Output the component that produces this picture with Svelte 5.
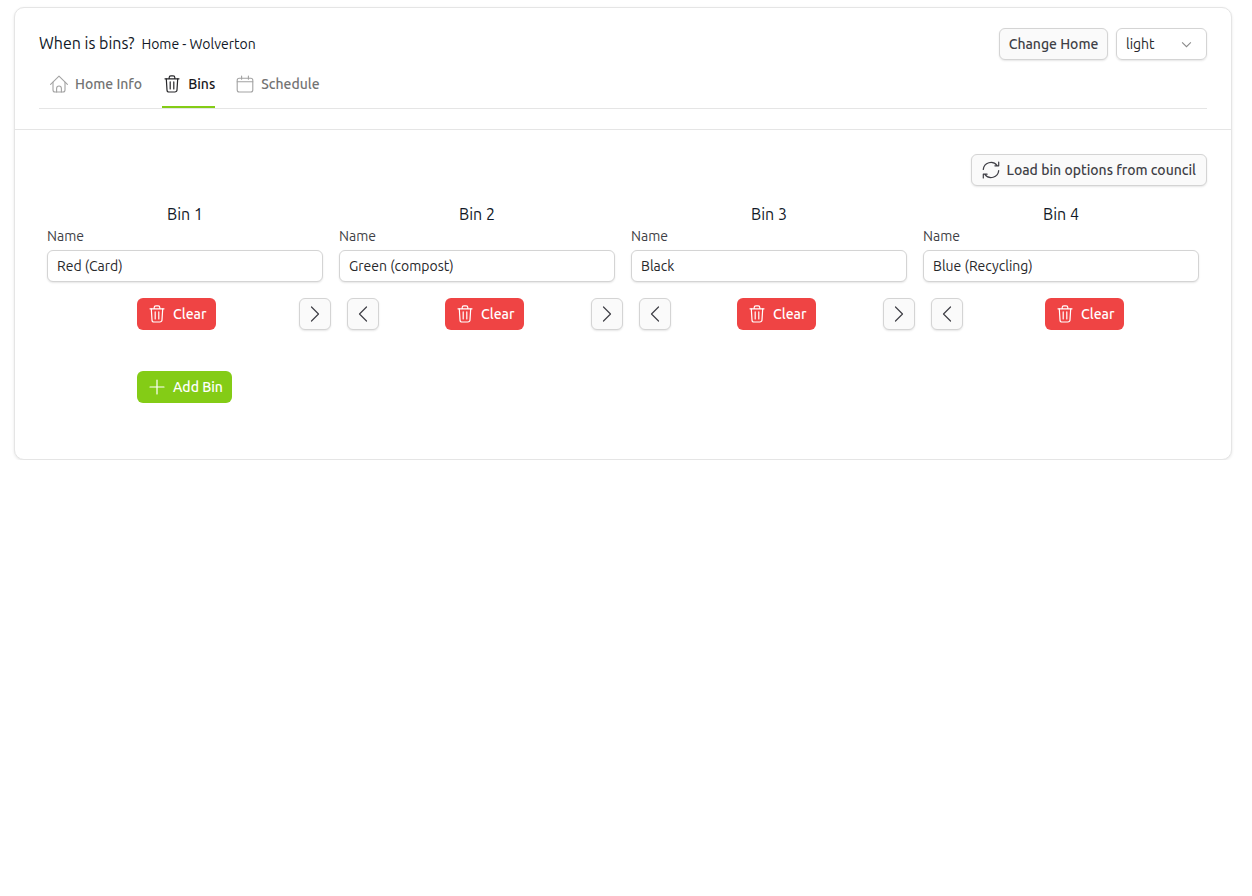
<script>
  const bins = ['Red (Card)', 'Green (compost)', 'Black', 'Blue (Recycling)'];
</script>

{#snippet trash(cls)}
  <svg class={cls} viewBox="0 0 18 18" fill="none" stroke="currentColor" stroke-width="1.2" stroke-linecap="round" stroke-linejoin="round">
    <path d="M2 3.8h14M6.2 3.8V2.6A1.7 1.7 0 0 1 7.9 .9h2.2a1.7 1.7 0 0 1 1.7 1.7v1.2" />
    <path d="M3.3 3.8l.7 11.1a2.1 2.1 0 0 0 2.1 2.1h5.8a2.1 2.1 0 0 0 2.1-2.1l.7-11.1" />
    <path d="M7.2 6.8v7.2M10.8 6.8v7.2" />
  </svg>
{/snippet}

<div class="card">
  <header class="head">
    <div class="top">
      <div class="title"><span class="app">When is bins?</span><span class="home">Home - Wolverton</span></div>
      <div class="actions">
        <button class="btn change">Change Home</button>
        <div class="select">
          <span>light</span>
          <svg viewBox="0 0 12 8" class="chev" fill="none" stroke="currentColor" stroke-width="1.2"><path d="M1 1.5l5 5 5-5" /></svg>
        </div>
      </div>
    </div>
    <nav class="tabs">
      <div class="tab">
        <svg class="ti" viewBox="0 0 18 18" fill="none" stroke="currentColor" stroke-width="1.1" stroke-linejoin="round" stroke-linecap="round">
          <path d="M.6 9.4L9 1.2l8.4 8.2" />
          <path d="M3 7.2v7.8a2 2 0 0 0 2 2h8a2 2 0 0 0 2-2V7.2" />
          <path d="M6.6 17v-3.6a2.4 2.4 0 0 1 4.8 0V17" />
        </svg>
        Home Info
      </div>
      <div class="tab active">{@render trash('ti')} Bins</div>
      <div class="tab">
        <svg class="ti" viewBox="0 0 18 18" fill="none" stroke="currentColor" stroke-width="1.1" stroke-linecap="round">
          <rect x="1.2" y="3.2" width="15.6" height="13.8" rx="2" />
          <path d="M1.2 6.8h15.6M5.6 1v3.2M12.4 1v3.2" />
        </svg>
        Schedule
      </div>
    </nav>
  </header>

  <main class="body">
    <div class="load-row">
      <button class="btn load">
        <svg class="ti" viewBox="0 0 18 18" fill="none" stroke="currentColor" stroke-width="1.2" stroke-linecap="round" stroke-linejoin="round">
          <path d="M1.3 8.4A7.7 7.7 0 0 1 15 4.4M16.7 1v3.8h-3.8" />
          <path d="M16.7 9.6A7.7 7.7 0 0 1 3 13.6M1.3 17v-3.8h3.8" />
        </svg>
        Load bin options from council
      </button>
    </div>
    <div class="bins">
      {#each bins as bin, i}
        <section class="bin">
          <h3>Bin {i + 1}</h3>
          <div class="field">
            <label for={`bin-${i}`}>Name</label>
            <input id={`bin-${i}`} value={bin} />
          </div>
          <div class="controls">
            {#if i > 0}
              <button class="btn sq" aria-label="Move left">
                <svg viewBox="0 0 10 16" fill="none" stroke="currentColor" stroke-width="1.2" stroke-linecap="round" stroke-linejoin="round"><path d="M8.5 1L1.5 8l7 7" /></svg>
              </button>
            {/if}
            <div class="mid">
              <button class="btn solid red">{@render trash('ti')} Clear</button>
            </div>
            {#if i < bins.length - 1}
              <button class="btn sq" aria-label="Move right">
                <svg viewBox="0 0 10 16" fill="none" stroke="currentColor" stroke-width="1.2" stroke-linecap="round" stroke-linejoin="round"><path d="M1.5 1l7 7-7 7" /></svg>
              </button>
            {/if}
          </div>
        </section>
      {/each}
    </div>
    <div class="bins add">
      <div class="add-cell">
        <button class="btn solid green">
          <svg class="ti" viewBox="0 0 18 18" fill="none" stroke="currentColor" stroke-width="1.2" stroke-linecap="round"><path d="M9 2v14M2 9h14" /></svg>
          Add Bin
        </button>
      </div>
    </div>
  </main>
</div>

<style>
  :global(html) {
    background: #fff;
  }
  :global(body) {
    margin: 0;
    background: #fff;
    font-family: Ubuntu, "Noto Sans", "Open Sans", sans-serif;
    color: #111827;
  }
  .card {
    margin: 7px 20px 0 14px;
    border: 1px solid #e5e5e5;
    border-radius: 10px;
    box-shadow: 0 1px 3px rgba(0, 0, 0, 0.1);
    background: #fff;
  }
  .head {
    padding: 20px 24px;
    border-bottom: 1px solid #e5e5e5;
  }
  .top {
    display: flex;
    justify-content: space-between;
    align-items: center;
    height: 32px;
  }
  .title {
    display: flex;
    align-items: baseline;
    gap: 7px;
    padding-bottom: 2px;
  }
  .app {
    font-size: 16px;
  }
  .home {
    font-size: 14px;
  }
  .actions {
    display: flex;
    gap: 8px;
  }
  button {
    font-family: inherit;
    white-space: nowrap;
  }
  .btn {
    display: inline-flex;
    align-items: center;
    justify-content: center;
    height: 32px;
    box-sizing: border-box;
    padding: 0 9px;
    font-size: 14px;
    font-weight: 500;
    color: #3f3f46;
    background: #fafafa;
    border: 1px solid #d4d4d4;
    border-radius: 6px;
    box-shadow: 0 1px 2px rgba(0, 0, 0, 0.1);
  }
  .change {
    width: 109px;
    padding: 0;
  }
  .select {
    display: flex;
    align-items: center;
    justify-content: space-between;
    width: 91px;
    height: 32px;
    box-sizing: border-box;
    padding: 0 14px 0 9px;
    font-size: 14px;
    color: #27272a;
    border: 1px solid #d4d4d4;
    border-radius: 6px;
    box-shadow: 0 1px 2px rgba(0, 0, 0, 0.1);
  }
  .chev {
    width: 11px;
    height: 7px;
    color: #8a8a8a;
  }
  .tabs {
    display: flex;
    height: 40px;
    margin-top: 8px;
    padding-left: 10px;
    gap: 20px;
    border-bottom: 1px solid #e5e5e5;
  }
  .tab {
    display: flex;
    align-items: center;
    gap: 7px;
    height: 40px;
    padding-bottom: 8px;
    box-sizing: border-box;
    font-size: 14px;
    font-weight: 500;
    color: #737373;
  }
  .tab .ti {
    color: #a3a3a3;
    margin-left: 1px;
  }
  .tab.active {
    color: #18181b;
    border-bottom: 2px solid #84cc16;
    padding-bottom: 6px;
  }
  .tab.active .ti {
    color: #27272a;
  }
  .ti {
    width: 18px;
    height: 18px;
    flex: none;
  }
  .body {
    padding: 24px;
  }
  .load-row {
    display: flex;
    justify-content: flex-end;
    margin-bottom: 16px;
  }
  .load {
    gap: 7px;
    padding: 0 10px;
  }
  .bins {
    display: grid;
    grid-template-columns: repeat(4, 1fr);
  }
  .bin {
    display: flex;
    flex-direction: column;
  }
  h3 {
    margin: 0;
    text-align: center;
    font-size: 16px;
    font-weight: 400;
    line-height: 24px;
  }
  .field {
    padding: 0 8px;
  }
  label {
    display: block;
    font-size: 14px;
    line-height: 20px;
    color: #3f3f46;
    margin-bottom: 4px;
  }
  input {
    display: block;
    width: 100%;
    height: 32px;
    box-sizing: border-box;
    padding: 0 9px;
    font: inherit;
    font-size: 14px;
    color: #27272a;
    border: 1px solid #d4d4d4;
    border-radius: 6px;
    box-shadow: 0 1px 2px rgba(0, 0, 0, 0.1);
    outline: none;
  }
  .controls {
    display: flex;
    margin-top: 16px;
    padding-left: 16px;
  }
  .mid {
    flex: 1;
    display: flex;
    justify-content: center;
  }
  .sq {
    width: 32px;
    padding: 0;
  }
  .sq svg {
    width: 10px;
    height: 16px;
  }
  .solid {
    gap: 7px;
    border: none;
    box-shadow: none;
    color: #fff;
    padding: 0 0 0 11px;
    justify-content: flex-start;
    margin-right: 1px;
  }
  .solid .ti {
    color: #fff;
  }
  .red {
    background: #ef4444;
    width: 79px;
  }
  .green {
    background: #84cc16;
    width: 95px;
  }
  .add {
    margin-top: 41px;
    margin-bottom: 32px;
  }
  .add-cell {
    display: flex;
    justify-content: center;
  }
</style>
